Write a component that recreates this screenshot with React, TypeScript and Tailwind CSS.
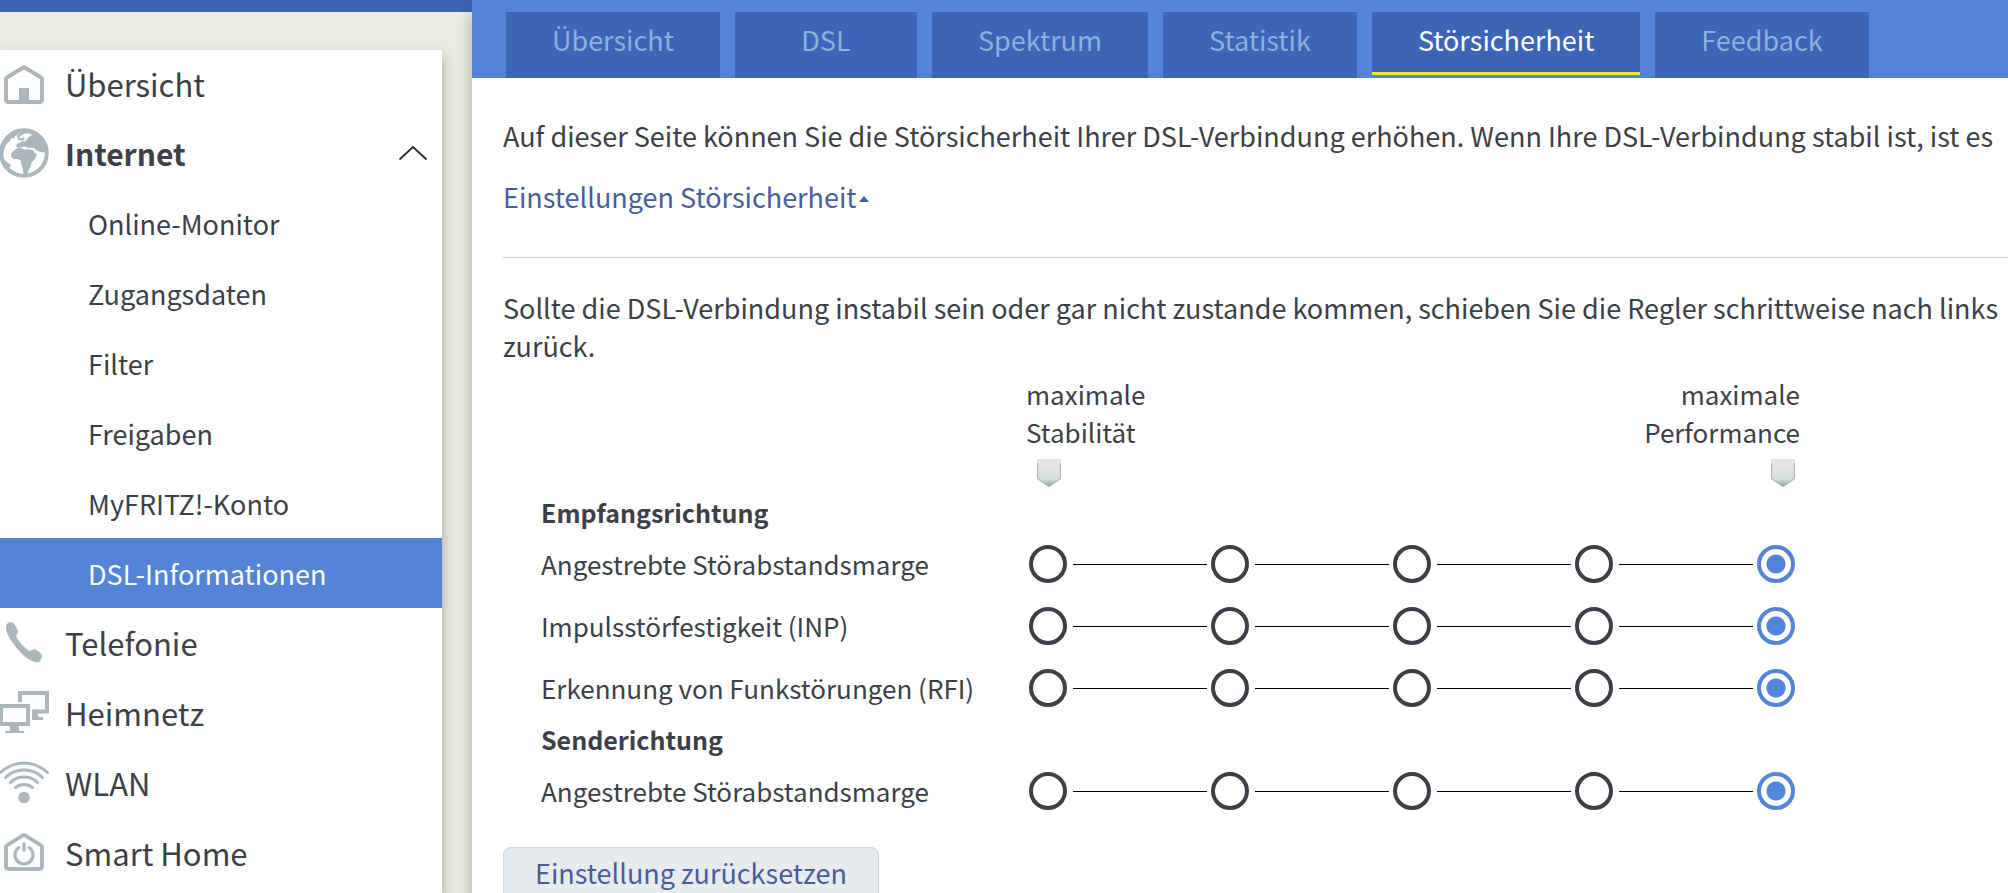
import React, { useState } from 'react';
import clsx from 'clsx';

interface IconProps {
  children: React.ReactNode;
}

const NavIcon: React.FC<IconProps> = ({ children }) => (
  <svg viewBox="0 0 50 50" className="w-[50px] h-[50px] shrink-0" fill="none" aria-hidden="true">
    {children}
  </svg>
);

const HomeIcon = () => (
  <NavIcon>
    <path d="M6 20.5 Q6 19 7.3 18.2 L22 9.3 Q24 8 26 9.3 L40.7 18.2 Q42 19 42 20.5 V40 Q42 43 39 43 H9 Q6 43 6 40 Z" stroke="#abb7bd" strokeWidth="4" />
    <path d="M19 29 H29 V43 H19 Z" fill="#abb7bd" />
  </NavIcon>
);

const GlobeIcon = () => (
  <NavIcon>
    <circle cx="24" cy="25" r="22.8" fill="#fff" stroke="#abb7bd" strokeWidth="4" />
    {/* Americas */}
    <path d="M3 21 C5 12 12 6 20 4 L17.5 7 L15 8 L14.5 10 L11 10.5 L10 13 L7 15.5 L5 19 L3 26 Z" fill="#abb7bd" />
    <path d="M1.5 29 L5 32.5 L9 35.5 L11 37 L9.5 39.5 L10.5 42 L9 44 L4 38 Z" fill="#abb7bd" />
    {/* Europe and Asia */}
    <path d="M24 3 L34 5 L41 10 L46 18 L46.5 24 L43 24.5 L39 23.5 L36 22 L34 20 L31 19.5 L28 20 L26 18.5 L22 19 L19 20 L16 18.5 L17 16 L20 14.5 L23 13 L25.5 13.5 L27 11 L29 9 L32 7 L29.5 5.5 L25 5.5 L21 7.5 L19 9.5 L21 10.5 L24 9 L24.5 11.5 L22 12.5 L18.5 12 L17 8 L20 5 Z" fill="#abb7bd" />
    {/* Africa */}
    <path d="M16 20.5 L21 20 L24.5 21.5 L28 21.5 L33 22 L34.5 25 L37 26.5 L34.5 31.5 L31.5 34.5 L30.5 39 L28.5 42 L27.5 46 L23.5 46 L22.5 40 L21 35.5 L20.5 32.5 L18 31 L13.5 31 L11 28.5 L11.5 25 L13.5 23 Z" fill="#abb7bd" />
  </NavIcon>
);

const PhoneIcon = () => (
  <NavIcon>
    <path d="M6 7.5 Q7 4.8 10 4.3 Q12.6 3.8 13.8 5.6 L17.6 11.8 Q18.5 13.5 17.3 15.2 L16.5 17 Q16 18.6 17 20.3 Q21.5 27.5 28 32.2 Q29.4 33.2 31 32.4 L33 31.4 Q34.7 30.8 36.2 31.8 L41 35.4 Q42.8 36.8 42 39.2 L40.6 42.2 Q39.4 44.8 36.2 44.3 Q29.5 43.2 22.5 36.3 Q13 27 7.7 16.5 Q5.3 11.5 6 7.5 Z" fill="#abb7bd" />
  </NavIcon>
);

const NetworkIcon = () => (
  <NavIcon>
    <path d="M20 14 V5 H47 V23.5 H34" stroke="#abb7bd" strokeWidth="4" />
    <path d="M32 21.5 H38 V29 H43 V32 H32 Z" fill="#abb7bd" />
    <path d="M1 18 H28 V36 H1 Z" stroke="#abb7bd" strokeWidth="4" />
    <path d="M10 38 H19 V43 H24 V45 H5 V43 H10 Z" fill="#abb7bd" />
  </NavIcon>
);

const WifiIcon = () => (
  <NavIcon>
    <g stroke="#abb7bd" strokeWidth="3" strokeLinecap="round">
      <path d="M0.5 14.5 Q11 5 24 5 Q37 5 47.5 14.5" />
      <path d="M5.5 19.5 Q13 12 24 12 Q35 12 42.5 19.5" />
      <path d="M10.5 24.5 Q16 19 24 19 Q32 19 37.5 24.5" />
      <path d="M15.5 29.5 Q19 26.5 24 26.5 Q29 26.5 32.5 29.5" />
    </g>
    <circle cx="24" cy="39.5" r="5.8" fill="#abb7bd" />
  </NavIcon>
);

const SmartHomeIcon = () => (
  <NavIcon>
    <path d="M6 19.5 Q6 18 7.3 17.2 L22 7.8 Q24 6.5 26 7.8 L40.7 17.2 Q42 18 42 19.5 V38.5 Q42 41 39.5 41 H8.5 Q6 41 6 38.5 Z" stroke="#abb7bd" strokeWidth="3.8" />
    <path d="M19 19.5 A9 9 0 1 0 29 19.5" stroke="#abb7bd" strokeWidth="3.2" strokeLinecap="round" />
    <path d="M24 16 V22" stroke="#abb7bd" strokeWidth="3.4" strokeLinecap="round" />
  </NavIcon>
);

interface NavEntry {
  label: string;
  icon: React.FC;
  children?: string[];
}

const NAV: NavEntry[] = [
  { label: 'Übersicht', icon: HomeIcon },
  {
    label: 'Internet',
    icon: GlobeIcon,
    children: ['Online-Monitor', 'Zugangsdaten', 'Filter', 'Freigaben', 'MyFRITZ!-Konto', 'DSL-Informationen'],
  },
  { label: 'Telefonie', icon: PhoneIcon },
  { label: 'Heimnetz', icon: NetworkIcon },
  { label: 'WLAN', icon: WifiIcon },
  { label: 'Smart Home', icon: SmartHomeIcon },
];

const TABS = ['Übersicht', 'DSL', 'Spektrum', 'Statistik', 'Störsicherheit', 'Feedback'];

const GROUPS = [
  {
    title: 'Empfangsrichtung',
    rows: [
      { id: 'ds-margin', label: 'Angestrebte Störabstandsmarge' },
      { id: 'ds-inp', label: 'Impulsstörfestigkeit (INP)' },
      { id: 'ds-rfi', label: 'Erkennung von Funkstörungen (RFI)' },
    ],
  },
  {
    title: 'Senderichtung',
    rows: [{ id: 'us-margin', label: 'Angestrebte Störabstandsmarge' }],
  },
];

const STEPS = [0, 1, 2, 3, 4];
const MAX_STEP = 4;

const Sidebar = () => (
  <nav className="w-[442px] mt-[38px] flex-1 bg-white shadow-[2px_6px_12px_rgba(0,0,0,0.25)]">
    <ul>
      {NAV.map(({ label, icon: Icon, children }) => (
        <li key={label} className="group">
          <a
            href="#"
            className={clsx(
              'flex items-center h-[70px] group-first:h-[68px] pr-[14px] gap-[15px]',
              children ? 'text-[30px] font-semibold' : 'text-[31px]'
            )}
          >
            <Icon />
            <span className="flex-1">{label}</span>
            {children && (
              <svg viewBox="0 0 30 16" className="w-[30px] h-4" fill="none" aria-hidden="true">
                <path d="M2 14 L15 2 L28 14" stroke="#26282b" strokeWidth="1.8" strokeLinecap="round" />
              </svg>
            )}
          </a>
          {children && (
            <ul>
              {children.map(child => (
                <li key={child}>
                  <a
                    href="#"
                    className={clsx(
                      'flex items-center h-[70px] pt-0.5 pl-[88px] text-[27px]',
                      child === 'DSL-Informationen' && 'bg-[#5484d8] text-white'
                    )}
                  >
                    {child}
                  </a>
                </li>
              ))}
            </ul>
          )}
        </li>
      ))}
    </ul>
  </nav>
);

const Marker = () => (
  <svg viewBox="0 0 24 28" className="w-6 h-7" aria-hidden="true">
    <defs>
      <linearGradient id="marker" x1="0" y1="0" x2="0" y2="1">
        <stop offset="0.35" stopColor="#e3e4e4" />
        <stop offset="0.75" stopColor="#d3d8d8" />
        <stop offset="1" stopColor="#8c9998" />
      </linearGradient>
    </defs>
    <path d="M0 0 H24 V20 L12 28 L0 20 Z" fill="url(#marker)" />
    <path d="M0.5 4 V19.7 L12 27.4 L23.5 19.7 V4" fill="none" stroke="#a9b4b4" strokeWidth="1" />
  </svg>
);

interface StepSliderProps {
  id: string;
  label: string;
  value: number;
  onChange: (value: number) => void;
}

const StepSlider: React.FC<StepSliderProps> = ({ id, label, value, onChange }) => (
  <div role="radiogroup" aria-labelledby={id} className="flex items-center h-[62px]">
    <span id={id} className="w-[488px] shrink-0">{label}</span>
    {STEPS.map(step => (
      <React.Fragment key={step}>
        {step > 0 && <span className="w-[134px] h-px ml-1.5 mr-1 shrink-0 bg-black" />}
        <input
          type="radio"
          name={id}
          aria-label={`${label} ${step + 1}`}
          checked={value === step}
          onChange={() => onChange(step)}
          className="appearance-none size-[38px] shrink-0 rounded-full border-4 border-[#3c4046] bg-white checked:border-[#5484d8] checked:bg-[radial-gradient(circle,#5484d8_9px,#fff_10px)]"
        />
      </React.Fragment>
    ))}
  </div>
);

const App: React.FC = () => {
  const [activeTab, setActiveTab] = useState('Störsicherheit');
  const [values, setValues] = useState<Record<string, number>>({});

  return (
    <div
      className="flex h-screen overflow-hidden bg-[#ecece4] text-[#3c4046] text-[27px] leading-[38px]"
      style={{ fontFamily: '"Noto Sans CJK SC", "Open Sans", sans-serif' }}
    >
      <div className="w-[472px] shrink-0 flex flex-col">
        <div className="h-3 bg-[#3c64b7]" />
        <Sidebar />
      </div>

      <div className="flex-1 min-w-0 bg-white shadow-[0_14px_14px_rgba(0,0,0,0.3)]">
        <header className="flex gap-[15px] h-[78px] pt-3 pl-[34px] bg-[#5484d8]">
          {TABS.map(tab => (
            <button
              key={tab}
              type="button"
              onClick={() => setActiveTab(tab)}
              className={clsx(
                'flex justify-center min-w-[182px] px-[46px] pt-[9px] bg-[#3c64b7] cursor-pointer',
                tab === activeTab ? 'mb-[3px] border-b-[3px] border-[#f3e529] text-white' : 'text-[#8db0de]'
              )}
            >
              {tab}
            </button>
          ))}
        </header>

        <main className="pl-[31px] pt-[39px] whitespace-nowrap">
          <p>
            Auf dieser Seite können Sie die Störsicherheit Ihrer DSL-Verbindung erhöhen. Wenn Ihre DSL-Verbindung stabil ist, ist es
          </p>
          <a href="#" className="inline-flex items-center gap-[2px] mt-[23px] text-[#475d9f]">
            Einstellungen Störsicherheit
            <svg viewBox="0 0 10 6" className="w-2.5 h-1.5 mt-1" aria-hidden="true">
              <path d="M5 0 L10 6 H0 Z" fill="#475d9f" />
            </svg>
          </a>
          <hr className="mt-[41px] mb-[31px] border-[#cccccc]" />
          <p>
            Sollte die DSL-Verbindung instabil sein oder gar nicht zustande kommen, schieben Sie die Regler schrittweise nach links
            <br />
            zurück.
          </p>

          <div className="mt-[10px] pl-[38px] text-[26px]">
            <div className="flex justify-between w-[1259px] pl-[485px] pb-[5px]">
              <div>
                maximale
                <br />
                Stabilität
                <div className="mt-2 pl-[11px]"><Marker /></div>
              </div>
              <div className="text-right">
                maximale
                <br />
                Performance
                <div className="flex justify-end mt-2 pr-[5px]"><Marker /></div>
              </div>
            </div>

            {GROUPS.map(group => (
              <section key={group.title}>
                <h2 className="h-[41px] leading-[41px] text-[25px] font-semibold">{group.title}</h2>
                {group.rows.map(row => (
                  <StepSlider
                    key={row.id}
                    id={row.id}
                    label={row.label}
                    value={values[row.id] ?? MAX_STEP}
                    onChange={value => setValues(prev => ({ ...prev, [row.id]: value }))}
                  />
                ))}
              </section>
            ))}
          </div>

          <button
            type="button"
            onClick={() => setValues({})}
            className="mt-[25px] px-[31px] pt-1.5 pb-2 rounded-lg border border-[#ccd5da] bg-[#e7ebee] text-[#475d9f] cursor-pointer"
          >
            Einstellung zurücksetzen
          </button>
        </main>
      </div>
    </div>
  );
};

export default App;
